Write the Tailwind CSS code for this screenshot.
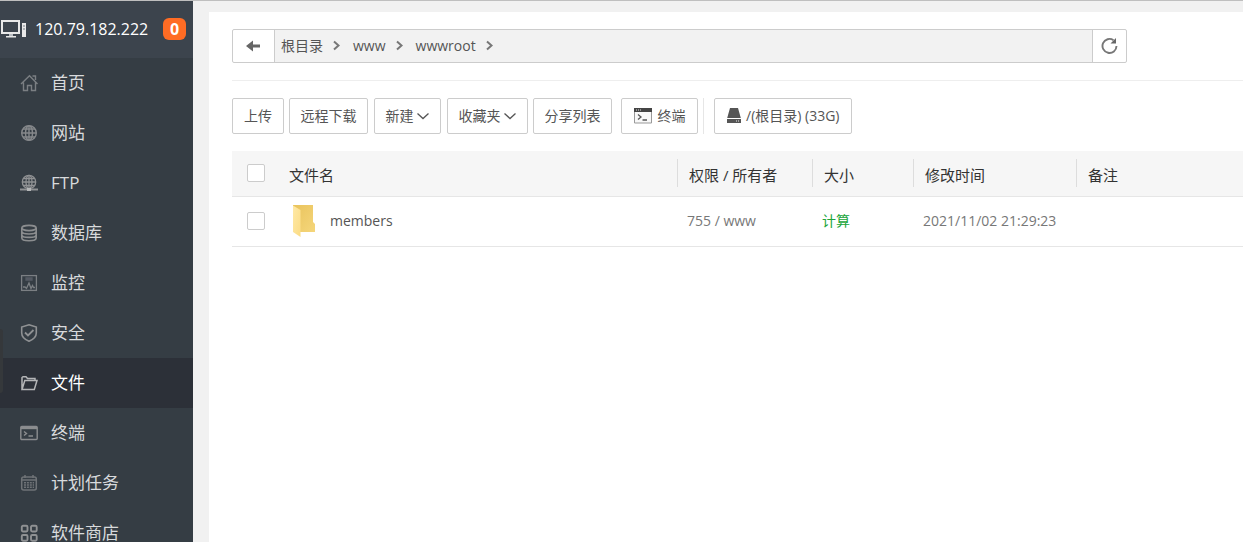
<!DOCTYPE html>
<html lang="zh-CN">
<head>
    <meta charset="UTF-8">
    <meta name="viewport" content="width=device-width, initial-scale=1.0">
    <title>文件</title>
    <script src="https://cdn.jsdelivr.net/npm/@tailwindcss/browser@4"></script>
</head>
<body class="font-['Open_Sans','Noto_Sans_CJK_SC',sans-serif] text-sm text-[#555] bg-[#f1f1f1]">
    <div class="relative flex h-screen overflow-hidden border-t border-[#bfbfbf]">

        <!-- Sidebar -->
        <aside class="w-[193px] shrink-0 bg-[#353d44] text-[#d8dadc]">
            <div class="flex items-center h-[57px] pb-0.5 bg-[#3c444d] text-white">
                <svg class="w-7 h-5 shrink-0" viewBox="0 0 28 20" fill="none">
                    <rect x="2" y="2" width="17" height="12" stroke="#e8e8e8" stroke-width="2"/>
                    <path d="M9 15h4v2H9z" fill="#b8bcc0"/>
                    <path d="M6 17h10v1.500H6z" fill="#e8e8e8"/>
                    <rect x="22" y="4" width="4" height="14" fill="#e8e8e8"/>
                    <path d="M23 7h2M23 10h2" stroke="#777d83"/>
                </svg>
                <a href="#" class="ml-[7px] text-base">120.79.182.222</a>
                <button class="ml-auto mr-[7px] w-[23px] h-[22px] rounded-md bg-[#ff6c24] text-base leading-[22px] font-bold">0</button>
            </div>
            <nav class="text-[17px]">
                <a href="#" class="flex items-center gap-[13px] h-[50px] pl-5">
                    <svg class="w-[18px] h-[18px]" viewBox="0 0 18 18" fill="none" stroke="#7b7f83" stroke-width="1.400"><path d="M1 10 9.500 1.800 17.500 10M3.500 8.500v8h4v-5h4v5h4v-8M12.500 2h3v4"/></svg>
                    <span>首页</span>
                </a>
                <a href="#" class="flex items-center gap-[13px] h-[50px] pl-5">
                    <svg class="w-[18px] h-[18px]" viewBox="0 0 18 18" fill="none" stroke="#85888b" stroke-width="1.400"><circle cx="9" cy="9" r="7.300"/><ellipse cx="9" cy="9" rx="3.500" ry="7.300"/><path d="M9 1.700v14.600M1.700 9h14.600M3 5h12M3 13h12"/></svg>
                    <span>网站</span>
                </a>
                <a href="#" class="flex items-center gap-[13px] h-[50px] pl-5">
                    <svg class="w-[18px] h-[18px]" viewBox="0 0 18 18" fill="none" stroke="#8f9193" stroke-width="1.300"><circle cx="9" cy="8" r="6.700"/><ellipse cx="9" cy="8" rx="3" ry="6.700"/><path d="M9 1.500v13M2.500 8h13M4 4.500h10M4 11.500h10"/><path d="M0 15.500h18" stroke-width="2"/><path d="M7 15.500h4" stroke="#b5b7b8" stroke-width="3"/></svg>
                    <span>FTP</span>
                </a>
                <a href="#" class="flex items-center gap-[13px] h-[50px] pl-5">
                    <svg class="w-[18px] h-[18px]" viewBox="0 0 18 18" fill="none" stroke="#8b8d8f" stroke-width="1.600"><ellipse cx="9" cy="4" rx="7.200" ry="2.600"/><path d="M1.800 4v10c0 3.600 14.400 3.600 14.400 0V4M1.800 7.300c0 3.600 14.400 3.600 14.400 0M1.800 10.700c0 3.600 14.400 3.600 14.400 0"/></svg>
                    <span>数据库</span>
                </a>
                <a href="#" class="flex items-center gap-[13px] h-[50px] pl-5">
                    <svg class="w-[18px] h-[18px]" viewBox="0 0 18 18" fill="none" stroke="#7b7f83" stroke-width="1.300"><rect x="1.600" y="1.600" width="14.800" height="14.800"/><path d="M6 4h6v2H6z" fill="#555b64" stroke="#555b64"/><path d="M3 13h2l1.500 1.500L9 9l2 5.500 1.500-3 1 2H15"/></svg>
                    <span>监控</span>
                </a>
                <a href="#" class="flex items-center gap-[13px] h-[50px] pl-5">
                    <svg class="w-[18px] h-[18px]" viewBox="0 0 18 18" fill="none" stroke="#8f9193" stroke-width="1.600"><path d="M9 .8 16.300 3v6c0 4-3.300 6.600-7.300 8.200C5 15.600 1.700 13 1.700 9V3z"/><path d="m5 8.500 3 3 5.500-5.500" stroke-width="1.800"/></svg>
                    <span>安全</span>
                </a>
                <a href="#" class="flex items-center gap-[13px] h-[50px] pl-5 bg-[#2c3038] text-white">
                    <svg class="w-[18px] h-[18px]" viewBox="0 0 18 18" fill="none" stroke="#b4b5b7" stroke-width="1.500"><path d="M2 15.500V3.500l1-.8h3L7.500 4.500H15V7M2 15.500h12.300L17 6.500H4.800z"/></svg>
                    <span>文件</span>
                </a>
                <a href="#" class="flex items-center gap-[13px] h-[50px] pl-5">
                    <svg class="w-[18px] h-[18px]" viewBox="0 0 18 18" fill="none" stroke="#8b8d8f" stroke-width="1.400"><rect x=".8" y="2.500" width="16.400" height="13" rx="1"/><path d="M1 3.800h16" stroke-width="2.800"/><path d="m4 7.500 2.500 2L4 11.500M8.500 12H13"/></svg>
                    <span>终端</span>
                </a>
                <a href="#" class="flex items-center gap-[13px] h-[50px] pl-5">
                    <svg class="w-[18px] h-[18px]" viewBox="0 0 18 18" fill="none" stroke="#6f7377" stroke-width="1.500"><rect x="1.700" y="3" width="14.600" height="13" rx="2"/><path d="M5 1v3M13 1v3M2 6h14"/><path d="M4 8.700h10M4 11h10M4 13.300h10" stroke-dasharray="2 .9"/></svg>
                    <span>计划任务</span>
                </a>
                <a href="#" class="flex items-center gap-[13px] h-[50px] pl-5">
                    <svg class="w-[18px] h-[18px]" viewBox="0 0 18 18" fill="none" stroke="#8f9193" stroke-width="1.900"><rect x="1.800" y="1.800" width="5.700" height="5.700" rx="1.200"/><rect x="11" y="1.800" width="5.700" height="5.700" rx="1.200"/><rect x="1.800" y="11" width="5.700" height="5.700" rx="1.200"/><rect x="11" y="11" width="5.700" height="5.700" rx="1.200"/></svg>
                    <span>软件商店</span>
                </a>
            </nav>
        </aside>
        <!-- drawer handle on the window edge -->
        <div class="absolute left-0 top-[328px] w-[3px] h-[64px] rounded-r bg-[#35383b]"></div>

        <!-- File manager -->
        <main class="flex-1 min-w-0 mt-[11px] ml-4 pl-[23px] bg-white">
            <div class="flex h-[34px] mt-[17px] mr-[116px] border border-[#ccc] rounded-xs">
                <button class="flex items-center justify-center w-[42px] border-r border-[#ccc]" aria-label="返回">
                    <svg class="w-4 h-4" viewBox="0 0 16 16" fill="#666"><path d="M0 8 7 2.500V6.500h7v3H7v4z"/></svg>
                </button>
                <div class="flex flex-1 items-center pl-1.5 bg-[#f2f2f2]">
                    <a href="#">根目录</a>
                    <svg class="w-[9px] h-3 ml-[10px] mr-[11px]" viewBox="0 0 9 12" fill="none" stroke="#777" stroke-width="2"><path d="m1 1.500 4.500 4L1 9.500"/></svg>
                    <a href="#">www</a>
                    <svg class="w-[9px] h-3 ml-[10px] mr-[11px]" viewBox="0 0 9 12" fill="none" stroke="#777" stroke-width="2"><path d="m1 1.500 4.500 4L1 9.500"/></svg>
                    <a href="#">wwwroot</a>
                    <svg class="w-[9px] h-3 ml-[10px] mr-[11px]" viewBox="0 0 9 12" fill="none" stroke="#777" stroke-width="2"><path d="m1 1.500 4.500 4L1 9.500"/></svg>
                </div>
                <button class="flex items-center justify-center w-[34px] border-l border-[#ccc]" aria-label="刷新">
                    <svg class="w-[18px] h-[18px]" viewBox="0 0 18 18" fill="none" stroke="#777" stroke-width="1.900"><path d="M15.500 9A7 7 0 1 1 12.500 3.200"/><path d="M15 1v5.500H9.500z" fill="#666" stroke="none"/></svg>
                </button>
            </div>

            <div class="flex items-center mt-[17px] pt-[17px] border-t border-[#eee] text-[#555]">
                <button class="h-9 w-[52px] mr-[5px] border border-[#ccc] rounded-xs">上传</button>
                <button class="h-9 w-[79px] mr-1.5 border border-[#ccc] rounded-xs">远程下载</button>
                <button class="flex items-center justify-center h-9 w-[67px] mr-1.5 border border-[#ccc] rounded-xs">
                    新建
                    <svg class="w-[14px] h-3 ml-0.5" viewBox="0 0 14 12" fill="none" stroke="#555" stroke-width="1.300"><path d="m1.500 3.500 5.500 5 5.500-5"/></svg>
                </button>
                <button class="flex items-center justify-center h-9 w-[81px] mr-[5px] border border-[#ccc] rounded-xs">
                    收藏夹
                    <svg class="w-[14px] h-3 ml-0.5" viewBox="0 0 14 12" fill="none" stroke="#555" stroke-width="1.300"><path d="m1.500 3.500 5.500 5 5.500-5"/></svg>
                </button>
                <button class="h-9 w-[79px] mr-[9px] border border-[#ccc] rounded-xs">分享列表</button>
                <button class="flex items-center justify-center h-9 w-[77px] border border-[#ccc] rounded-xs">
                    <svg class="w-[18px] h-4 mr-1.5" viewBox="0 0 18 16" fill="none"><path d="M.5 1v14h17V1z" fill="#f8f8f8" stroke="#999"/><path d="M0 0h18v4H0z" fill="#444"/><path d="M2 2h1m1 0h1m1 0h1" stroke="#ddd"/><path d="m4 6.500 3 2.500-3 2.500M8.500 12H13" stroke="#555" stroke-width="1.300"/></svg>
                    终端
                </button>
                <span class="w-px h-9 ml-[5px] mr-[10px] bg-[#e6e6e6]"></span>
                <button class="flex items-center justify-center h-9 px-3 border border-[#ccc] rounded-xs">
                    <svg class="w-[14px] h-4 mr-[5px]" viewBox="0 0 14 16" fill="#555"><path d="M3 0h8l2.800 10H.2zM0 11h14v4H0z"/><path d="M9 13h1m1 0h1" stroke="#eee"/></svg>
                    /(根目录) (33G)
                </button>
            </div>

            <table class="w-full mt-[17px] table-fixed border-collapse text-left">
                <colgroup>
                    <col class="w-12">
                    <col class="w-[397px]">
                    <col class="w-[135px]">
                    <col class="w-[101px]">
                    <col class="w-[163px]">
                    <col>
                </colgroup>
                <thead class="text-[15px] text-[#333]">
                    <tr class="h-[45px] bg-[#f6f6f6] border-b border-[#e6e6e6]">
                        <th class="pl-[15px]"><input type="checkbox" aria-label="全选" class="block appearance-none size-[18px] bg-white border border-[#ccc] rounded-xs"></th>
                        <th class="font-normal"><div class="h-7 pl-[9px] leading-8">文件名</div></th>
                        <th class="font-normal"><div class="h-7 pl-[11px] border-l border-[#ddd] leading-8">权限 / 所有者</div></th>
                        <th class="font-normal"><div class="h-7 pl-[11px] border-l border-[#ddd] leading-8">大小</div></th>
                        <th class="font-normal"><div class="h-7 pl-[11px] border-l border-[#ddd] leading-8">修改时间</div></th>
                        <th class="font-normal"><div class="h-7 pl-[11px] border-l border-[#ddd] leading-8">备注</div></th>
                    </tr>
                </thead>
                <tbody class="text-[#777]">
                    <tr class="h-[50px] border-b border-[#e6e6e6]">
                        <td class="pl-[15px]"><input type="checkbox" aria-label="members" class="block appearance-none size-[18px] bg-white border border-[#ccc] rounded-xs"></td>
                        <td class="pl-3">
                            <a href="#" class="flex items-center gap-[14px] text-[#555]">
                                <svg class="w-6 h-[34px]" viewBox="0 0 24 34">
                                    <defs>
                                        <linearGradient id="back" x1="0" y1="0" x2="1" y2="1"><stop offset="0" stop-color="#e9c35c"/><stop offset="1" stop-color="#f5d67b"/></linearGradient>
                                        <linearGradient id="flap" x1="0" y1="0" x2="1" y2="1"><stop offset="0" stop-color="#ffe9a6"/><stop offset="1" stop-color="#fbdc85"/></linearGradient>
                                    </defs>
                                    <path d="M1 1h20v17l2 2v8H8L1 27z" fill="url(#back)"/>
                                    <path d="M1 1.500 8.500 6v27L1 28z" fill="url(#flap)"/>
                                </svg>
                                members
                            </a>
                        </td>
                        <td class="pl-[10px]">755 / www</td>
                        <td class="pl-[10px]"><a href="#" class="text-[#20a53a]">计算</a></td>
                        <td class="pl-[10px]">2021/11/02 21:29:23</td>
                        <td></td>
                    </tr>
                </tbody>
            </table>
        </main>
    </div>
</body>
</html>
